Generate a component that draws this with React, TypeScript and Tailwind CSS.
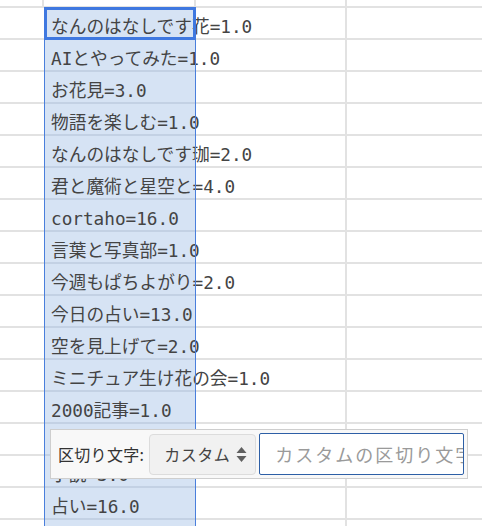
const rows = [
  "なんのはなしです花=1.0",
  "AIとやってみた=1.0",
  "お花見=3.0",
  "物語を楽しむ=1.0",
  "なんのはなしです珈=2.0",
  "君と魔術と星空と=4.0",
  "cortaho=16.0",
  "言葉と写真部=1.0",
  "今週もぱちよがり=2.0",
  "今日の占い=13.0",
  "空を見上げて=2.0",
  "ミニチュア生け花の会=1.0",
  "2000記事=1.0",
  "小説を読む=1.0",
  "小説=3.0",
  "占い=16.0",
  "",
];

function SortArrows() {
  return (
    <svg width="11" height="17" viewBox="0 0 11 17" className="shrink-0">
      <path d="M5.5 1 L10.5 7 H0.5 Z" fill="#5f5f5f" />
      <path d="M5.5 16 L10.5 10 H0.5 Z" fill="#5f5f5f" />
    </svg>
  );
}

export default function App() {
  return (
    <div className="relative w-[482px] h-[526px] overflow-hidden bg-white font-['DejaVu_Sans_Mono','Noto_Sans_CJK_JP',monospace] text-[17.7px] text-[#444]">
      {/* grid */}
      <div className="flex flex-col">
        <div className="flex h-[8px]">
          <div className="w-[44px] border-b-2 border-r-2 border-[#e2e2e2]" />
          <div className="w-[152px] border-b-2 border-r-2 border-[#e2e2e2]" />
          <div className="w-[151px] border-b-2 border-r-2 border-[#e2e2e2]" />
          <div className="flex-1 border-b-2 border-[#e2e2e2]" />
        </div>
        {rows.map((text, i) => (
          <div key={i} className="flex h-[32px]">
            <div className="w-[44px] border-b-2 border-[#e2e2e2]" />
            <div className="w-[152px] flex items-center pl-[7px] pt-[8px] bg-[#d6e3f4] border-b-2 border-[#c3d1e4]">
              <span className="relative z-10 whitespace-nowrap">{text}</span>
            </div>
            <div className="w-[151px] border-b-2 border-r-2 border-[#e2e2e2]" />
            <div className="flex-1 border-b-2 border-[#e2e2e2]" />
          </div>
        ))}
      </div>

      {/* column selection + active cell */}
      <div className="pointer-events-none absolute left-[44px] top-[8px] bottom-0 w-[152px] z-20 border-x border-[#4a7fdc]" />
      <div className="pointer-events-none absolute left-[44px] top-[7px] w-[152px] h-[33px] z-20 border-[3px] border-[#3f78e0]" />

      {/* separator picker */}
      <div className="absolute left-[50px] top-[429px] w-[418px] h-[50px] z-30 flex items-center pl-[7px] bg-[#f8f8f8] border border-[#cecece] font-['Noto_Sans_CJK_JP',sans-serif]">
        <span className="text-[16px] tracking-[0.3px] text-[#333] whitespace-nowrap">区切り文字:</span>
        <div className="ml-[5px] w-[107px] h-[41px] flex items-center justify-between pl-[14px] pr-[8px] rounded-[4px] bg-[#f1f1f1] border border-[#dcdcdc]">
          <span className="text-[16px] text-[#444] tracking-[0.5px]">カスタム</span>
          <SortArrows />
        </div>
        <div className="ml-[3px] w-[205px] h-[42px] flex items-center pl-[15px] overflow-hidden bg-white border-[1.5px] border-[#2d5fa6] rounded-[2px]">
          <span className="text-[18px] tracking-[2px] text-[#9a9a9a] whitespace-nowrap">カスタムの区切り文字</span>
        </div>
      </div>
    </div>
  );
}
